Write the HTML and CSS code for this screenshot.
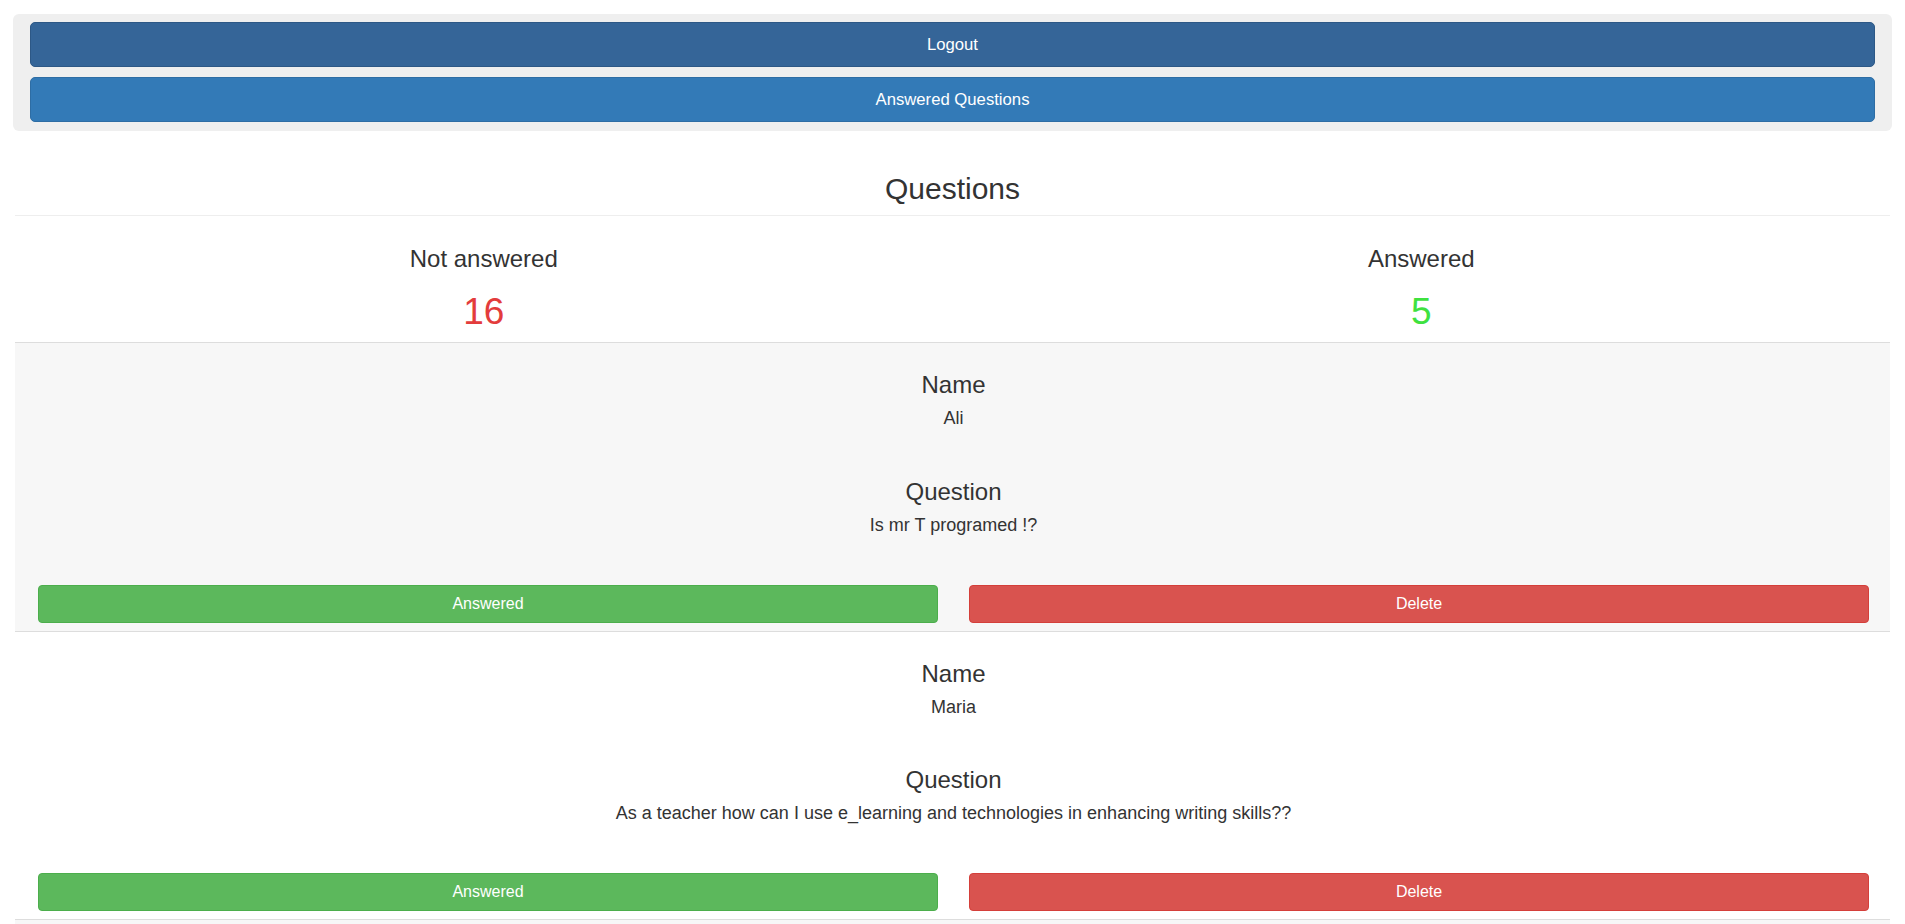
FILE: index.html
```html
<!DOCTYPE html>
<html lang="en">
<head>
<meta charset="utf-8">
<title>Questions</title>
<link rel="stylesheet" href="styles.css">
</head>
<body>
<div class="topbar">
  <button class="btn-top btn-logout">Logout</button>
  <button class="btn-top btn-answered-list">Answered Questions</button>
</div>
<main class="content">
  <h2 class="page-title">Questions</h2>
  <section class="stats">
    <div class="stat">
      <h3 class="stat-label">Not answered</h3>
      <div class="stat-value stat-red">16</div>
    </div>
    <div class="stat">
      <h3 class="stat-label">Answered</h3>
      <div class="stat-value stat-green">5</div>
    </div>
  </section>
  <section class="card card-striped">
    <div class="field">
      <h3 class="field-label">Name</h3>
      <p class="field-text">Ali</p>
    </div>
    <div class="field field-question">
      <h3 class="field-label">Question</h3>
      <p class="field-text">Is mr T programed !?</p>
    </div>
    <div class="actions">
      <button class="btn btn-success">Answered</button>
      <button class="btn btn-danger">Delete</button>
    </div>
  </section>
  <section class="card">
    <div class="field">
      <h3 class="field-label">Name</h3>
      <p class="field-text">Maria</p>
    </div>
    <div class="field field-question">
      <h3 class="field-label">Question</h3>
      <p class="field-text">As a teacher how can I use e_learning and technologies in enhancing writing skills??</p>
    </div>
    <div class="actions">
      <button class="btn btn-success">Answered</button>
      <button class="btn btn-danger">Delete</button>
    </div>
  </section>
  <section class="card card-striped card-partial"></section>
</main>
</body>
</html>
```
FILE: styles.css
```css
* { box-sizing: border-box; }
html, body { margin: 0; padding: 0; }
body {
  font-family: "Liberation Sans", Arial, Helvetica, sans-serif;
  color: #333;
  background: #fff;
  overflow: hidden;
}
.topbar {
  margin: 14px 13px 0;
  padding: 8px 17px 9px;
  background: #efefef;
  border-radius: 6px;
  display: flex;
  flex-direction: column;
  gap: 10px;
}
.btn-top {
  display: block;
  width: 100%;
  height: 45px;
  border-radius: 5px;
  border: 1px solid #2e6da4;
  color: #fff;
  font-family: inherit;
  font-size: 16.7px;
  padding: 0;
}
.btn-logout { background: #356598; border-color: #2d5886; }
.btn-answered-list { background: #337ab7; border-color: #2e6da4; }

.content { margin: 0 15px; }
.page-title {
  margin: 41px 0 0;
  padding-bottom: 10px;
  border-bottom: 1px solid #eee;
  font-size: 30px;
  font-weight: 400;
  line-height: 33px;
  text-align: center;
}
.stats {
  display: flex;
  padding: 30px 0 9px;
  border-bottom: 1px solid #ddd;
}
.stat { flex: 1; text-align: center; }
.stat-label {
  margin: 0;
  font-size: 24px;
  font-weight: 400;
  line-height: 26.4px;
}
.stat-value {
  margin-top: 19px;
  font-size: 37px;
  line-height: 42px;
}
.stat-red { color: #e33c3c; }
.stat-green { color: #3fe13f; }

.card {
  padding: 29px 21px 8px 23px;
  border-bottom: 1px solid #ddd;
  text-align: center;
}
.card-striped { background: #f7f7f7; }
.card-partial { height: 10px; border-bottom: none; }
.field-label {
  margin: 0;
  font-size: 24px;
  font-weight: 400;
  line-height: 26.4px;
}
.field-text {
  margin: 7.5px 0 0;
  font-size: 18px;
  line-height: 25.7px;
}
.field-question { margin-top: 47px; }
.actions {
  display: flex;
  gap: 31px;
  margin-top: 46px;
}
.btn {
  flex: 1;
  height: 38px;
  border-radius: 4px;
  border: 1px solid transparent;
  color: #fff;
  font-family: inherit;
  font-size: 16px;
  padding: 0;
}
.btn-success { background: #5cb85c; border-color: #4cae4c; }
.btn-danger { background: #d9534f; border-color: #d43f3a; }
```
